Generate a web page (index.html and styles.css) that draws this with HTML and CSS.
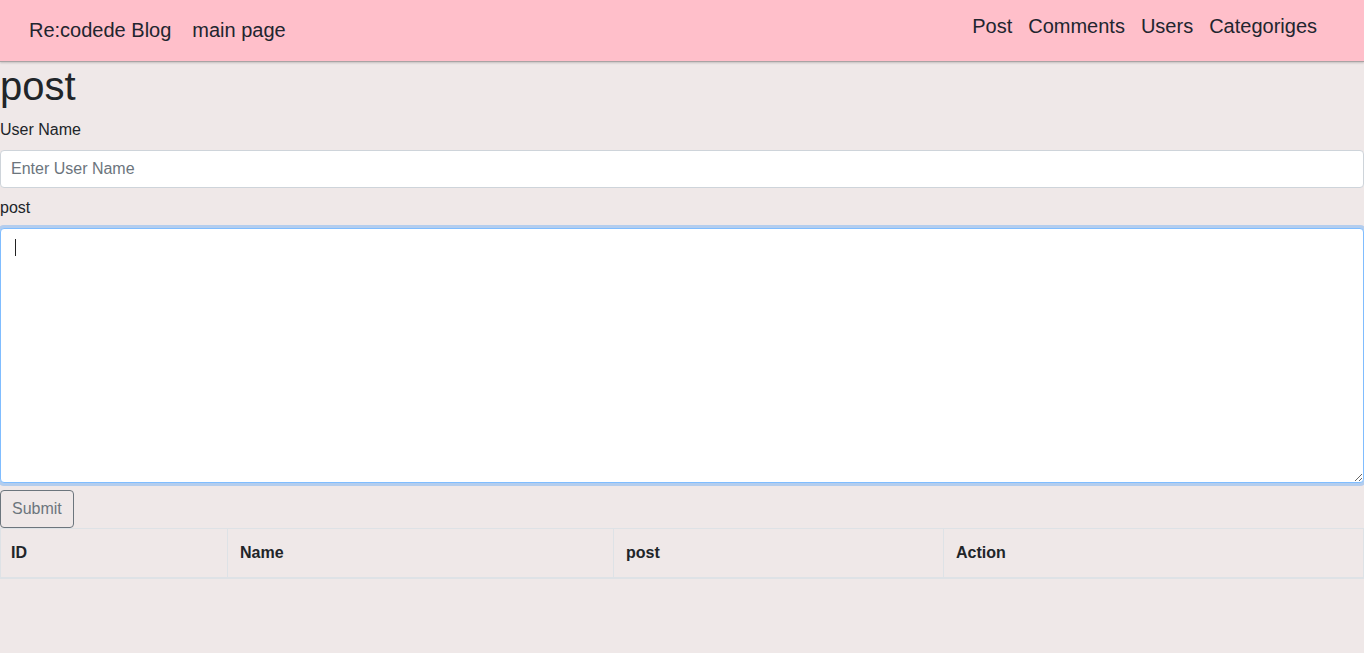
FILE: index.html
```html
<!DOCTYPE html>
<html lang="en">
<head>
<meta charset="utf-8">
<title>Re:codede Blog</title>
<link rel="stylesheet" href="styles.css">
</head>
<body>
<nav class="navbar">
  <div class="nav-left">
    <a class="brand" href="#">Re:codede Blog</a>
    <a class="brand-link" href="#">main page</a>
  </div>
  <ul class="nav-right">
    <li><a class="nav-link" href="#">Post</a></li>
    <li><a class="nav-link" href="#">Comments</a></li>
    <li><a class="nav-link" href="#">Users</a></li>
    <li><a class="nav-link" href="#">Categoriges</a></li>
  </ul>
</nav>
<main class="content">
  <h1 class="title">post</h1>
  <form class="form">
    <label class="label" for="username">User Name</label>
    <input class="field input" id="username" type="text" placeholder="Enter User Name">
    <label class="label label-post" for="post">post</label>
    <div class="area-wrap">
      <textarea class="field area focused" id="post"></textarea>
      <span class="caret"></span>
    </div>
    <button class="btn" type="button">Submit</button>
  </form>
  <table class="table">
    <colgroup>
      <col class="c-id"><col class="c-name"><col class="c-post"><col class="c-action">
    </colgroup>
    <thead>
      <tr><th class="th-first">ID</th><th>Name</th><th>post</th><th>Action</th></tr>
    </thead>
  </table>
</main>
</body>
</html>
```

FILE: styles.css
```css
* { box-sizing: border-box; }
html, body {
  margin: 0;
  padding: 0;
  background: #efe8e8;
  color: #212529;
  font-family: "Liberation Sans", Arial, Helvetica, sans-serif;
  font-size: 16px;
  line-height: 1.5;
}
a { text-decoration: none; color: #212529; }

.navbar {
  height: 62px;
  background: #ffbfca;
  display: flex;
  justify-content: space-between;
  align-items: flex-start;
  border-bottom: 1px solid #a9a3a4;
  box-shadow: 0 1px 2px rgba(0,0,0,0.18);
  padding: 0 39px 0 29px;
}
.nav-left {
  display: flex;
  align-items: center;
  gap: 21px;
  padding-top: 15px;
}
.brand, .brand-link {
  font-size: 20px;
  line-height: 30px;
  color: #22252f;
}
.nav-right {
  list-style: none;
  margin: 0;
  padding: 11px 0 0 0;
  display: flex;
}
.nav-link {
  display: block;
  font-size: 20px;
  line-height: 30px;
  padding: 0 8px;
  color: #22252f;
}

.content { padding: 0; }
.title {
  margin: 0 0 8px 0;
  font-size: 40px;
  font-weight: 400;
  line-height: 48px;
}
.form { display: flex; flex-direction: column; align-items: stretch; }
.label {
  display: block;
  line-height: 24px;
  margin-bottom: 8px;
}
.label-post { margin-top: 8px; margin-bottom: 8px; }
.field {
  display: block;
  width: 100%;
  height: 38px;
  padding: 6px 12px;
  font-family: inherit;
  font-size: 16px;
  line-height: 24px;
  color: #495057;
  background: #fff;
  border: 1px solid #ced4da;
  border-radius: 4px;
  outline: none;
}
.input { padding-left: 10px; }
.field::placeholder { color: #6c757d; }
.area-wrap { position: relative; }
.area {
  height: 255px;
  resize: vertical;
}
.focused {
  border-color: #80bdff;
  box-shadow: 0 0 0 3px rgba(0,123,255,0.25);
}
.caret {
  position: absolute;
  left: 15px;
  top: 11px;
  width: 1px;
  height: 17px;
  background: #222;
}
.btn {
  align-self: flex-start;
  margin-top: 7px;
  height: 38px;
  padding: 6px 11px;
  font-family: inherit;
  font-size: 16px;
  line-height: 24px;
  color: #6c757d;
  background: transparent;
  border: 1px solid #6c757d;
  border-radius: 4px;
}

.table {
  width: 100%;
  border-collapse: collapse;
  table-layout: fixed;
  border: 1px solid #dee2e6;
}
.c-id { width: 227px; }
.c-name { width: 386px; }
.c-post { width: 330px; }
.c-action { width: auto; }
.table th {
  text-align: left;
  font-weight: 700;
  padding: 12px;
  line-height: 24px;
  border: 1px solid #dee2e6;
  border-bottom: 2px solid #dee2e6;
}
.table .th-first { padding-left: 10px; }
```
